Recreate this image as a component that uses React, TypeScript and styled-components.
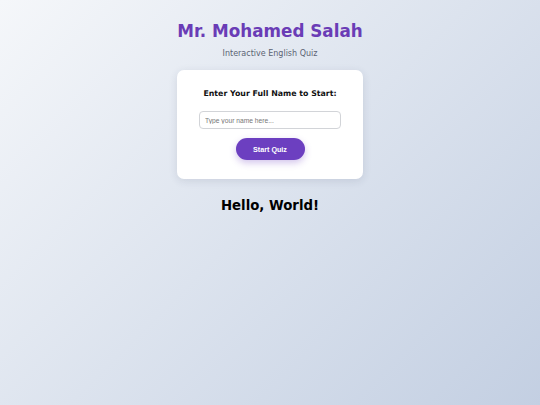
import { useState } from "react";
import styled, { createGlobalStyle } from "styled-components";

const GlobalStyle = createGlobalStyle`
  html, body {
    margin: 0;
    padding: 0;
  }
  body {
    min-height: 100vh;
    background: linear-gradient(135deg, #f5f7fa 0%, #c3cfe2 100%);
    font-family: "DejaVu Sans", Verdana, sans-serif;
  }
`;

const Page = styled.main`
  min-height: 100vh;
  display: flex;
  flex-direction: column;
  align-items: center;
  padding-top: 21px;
  box-sizing: border-box;
`;

const Title = styled.h1`
  margin: 0;
  font-size: 16.8px;
  line-height: 20px;
  font-weight: bold;
  color: #6a3cb6;
`;

const Subtitle = styled.p`
  margin: 8px 0 0;
  font-size: 8px;
  line-height: 10px;
  color: #5b6373;
`;

const Card = styled.section`
  margin-top: 11px;
  width: 186px;
  box-sizing: border-box;
  padding: 19px 22px;
  background: #ffffff;
  border-radius: 7px;
  box-shadow: 0 2px 8px rgba(40, 50, 80, 0.12);
  display: flex;
  flex-direction: column;
  align-items: center;
`;

const Label = styled.label`
  font-size: 7.85px;
  line-height: 10px;
  font-weight: bold;
  color: #111;
`;

const NameInput = styled.input`
  margin-top: 12px;
  width: 142px;
  height: 18px;
  box-sizing: border-box;
  padding: 0 5px;
  border: 1px solid #d2d4d8;
  border-radius: 4px;
  font-family: "Liberation Sans", Arial, sans-serif;
  font-size: 6.7px;
  color: #333;
  outline: none;

  &::placeholder {
    color: #777;
  }
`;

const StartButton = styled.button`
  margin-top: 9px;
  width: 69px;
  height: 22px;
  border: none;
  border-radius: 11px;
  background: #6c3fc0;
  color: #fff;
  font-family: "Liberation Sans", Arial, sans-serif;
  font-weight: bold;
  font-size: 7.2px;
  cursor: pointer;
  box-shadow: 0 3px 7px rgba(108, 63, 192, 0.3);
`;

const Greeting = styled.h2`
  margin: 19px 0 0;
  font-size: 13.3px;
  line-height: 16px;
  font-weight: bold;
  color: #000;
`;

export default function App() {
  const [name, setName] = useState("");

  return (
    <>
      <GlobalStyle />
      <Page>
        <Title>Mr. Mohamed Salah</Title>
        <Subtitle>Interactive English Quiz</Subtitle>
        <Card>
          <Label htmlFor="full-name">Enter Your Full Name to Start:</Label>
          <NameInput
            id="full-name"
            placeholder="Type your name here..."
            value={name}
            onChange={(e) => setName(e.target.value)}
          />
          <StartButton type="button">Start Quiz</StartButton>
        </Card>
        <Greeting>Hello, World!</Greeting>
      </Page>
    </>
  );
}
